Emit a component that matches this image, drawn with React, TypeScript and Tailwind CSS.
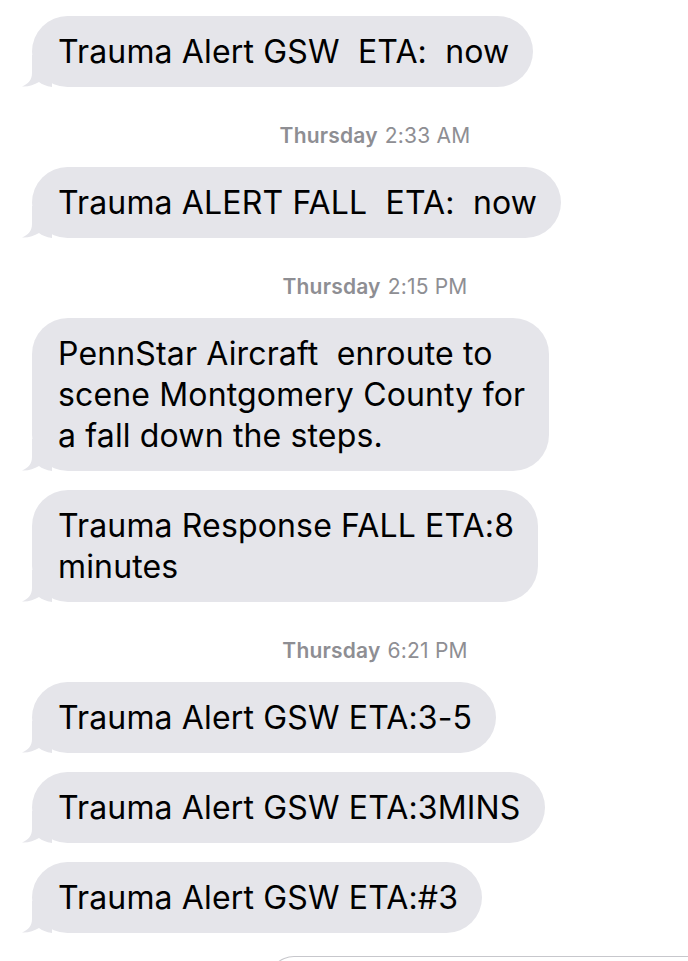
import React from "react"

type Item = { kind: "msg"; lines: string[] } | { kind: "time"; day: string; time: string }

const items: Item[] = [
    { kind: "msg", lines: ["Trauma Alert GSW  ETA:  now"] },
    { kind: "time", day: "Thursday", time: "2:33 AM" },
    { kind: "msg", lines: ["Trauma ALERT FALL  ETA:  now"] },
    { kind: "time", day: "Thursday", time: "2:15 PM" },
    { kind: "msg", lines: ["PennStar Aircraft  enroute to", "scene Montgomery County for", "a fall down the steps."] },
    { kind: "msg", lines: ["Trauma Response FALL ETA:8", "minutes"] },
    { kind: "time", day: "Thursday", time: "6:21 PM" },
    { kind: "msg", lines: ["Trauma Alert GSW ETA:3-5"] },
    { kind: "msg", lines: ["Trauma Alert GSW ETA:3MINS"] },
    { kind: "msg", lines: ["Trauma Alert GSW ETA:#3"] },
]

function Tail() {
    return (
        <svg className="absolute -left-[10px] bottom-0" width="30" height="32" viewBox="0 0 30 32" aria-hidden="true">
            <path d="M10 0 L10 18 C10 25 6 29 0 31.5 C6 32 12 30 17 27 C20 29.5 24 31 30 32 L30 0 Z" fill="#e5e5ea" />
        </svg>
    )
}

function Bubble({ lines }: { lines: string[] }) {
    return (
        <div className="relative w-fit rounded-[36px] bg-[#e5e5ea] pl-[26px] pr-[24px] py-[15px]">
            <Tail />
            <div className="relative whitespace-pre text-[32px] leading-[41px] tracking-[0.15px] text-black [font-feature-settings:'calt'_0]">
                {lines.map((l, i) => (
                    <div key={i}>{l}</div>
                ))}
            </div>
        </div>
    )
}

export default function App() {
    return (
        <div className="h-[961px] w-full overflow-hidden bg-white" style={{ fontFamily: "Inter, 'Noto Sans', sans-serif" }}>
            <div className="flex flex-col items-start pl-[32px] pt-[16px]">
                {items.map((it, i) => {
                    const prev = items[i - 1]
                    if (it.kind === "time") {
                        return (
                            <div key={i} className="mt-[37px] mb-[19px] flex w-full justify-center pl-[30px] text-[21px] leading-[24px] tracking-[0.2px] text-[#8e8e93]">
                                <span className="font-semibold">{it.day}</span>
                                <span className="ml-[7px]">{it.time}</span>
                            </div>
                        )
                    }
                    const mt = i === 0 || prev?.kind === "time" ? "" : "mt-[19px]"
                    return (
                        <div key={i} className={mt}>
                            <Bubble lines={it.lines} />
                        </div>
                    )
                })}
                <div className="mt-[23px] ml-[236px] h-[40px] w-[500px] rounded-tl-[26px] border-l border-t border-[#c7c7cc]" />
            </div>
        </div>
    )
}
